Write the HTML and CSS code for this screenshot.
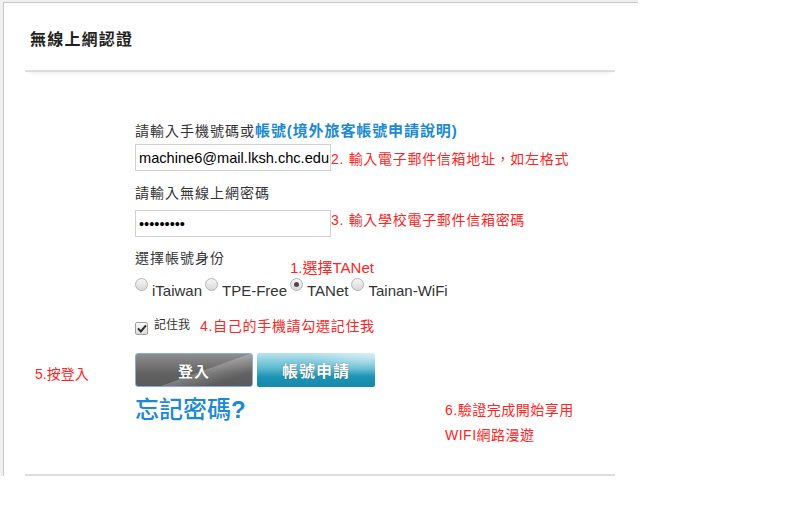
FILE: index.html
```html
<!DOCTYPE html>
<html>
<head>
  <meta charset="utf-8">
  <title>無線上網認證</title>
  <link rel="stylesheet" href="styles.css">
</head>
<body>
  <div class="frame">
    <div class="panel">
      <div class="header">
        <h2>無線上網認證</h2>
      </div>

      <form class="login-form">
        <div class="field label">請輸入手機號碼或<a href="#" class="link">帳號(境外旅客帳號申請說明)</a></div>
        <div class="field input-row first">
          <input type="text" class="text-input" value="machine6@mail.lksh.chc.edu">
          <span class="note">2.&nbsp;輸入電子郵件信箱地址，如左格式</span>
        </div>

        <div class="field label second">請輸入無線上網密碼</div>
        <div class="field input-row pass">
          <input type="password" class="text-input" value="123456789">
          <span class="note">3. 輸入學校電子郵件信箱密碼</span>
        </div>

        <div class="field label third">選擇帳號身份</div>
        <div class="field radio-row">
          <span class="note note-tanet">1.選擇TANet</span>
          <label class="radio"><span class="dot"></span><span class="radio-text">iTaiwan</span></label>
          <label class="radio"><span class="dot"></span><span class="radio-text">TPE-Free</span></label>
          <label class="radio"><span class="dot checked"></span><span class="radio-text">TANet</span></label>
          <label class="radio"><span class="dot"></span><span class="radio-text">Tainan-WiFi</span></label>
        </div>

        <div class="field remember-row">
          <span class="checkbox">
            <svg viewBox="0 0 12 12" width="10" height="10">
              <path d="M2 6.2l2.6 2.8L10 2.6" fill="none" stroke="#2b2b2b" stroke-width="2.4" stroke-linecap="square"/>
            </svg>
          </span>
          <span class="remember-text">記住我</span>
          <span class="note note-remember">4.自己的手機請勾選記住我</span>
        </div>

        <div class="button-row">
          <span class="note note-login">5.按登入</span>
          <button type="button" class="btn btn-login">登入</button>
          <button type="button" class="btn btn-apply">帳號申請</button>
        </div>

        <div class="field forgot-row">
          <a href="#" class="forgot">忘記密碼<b>?</b></a>
          <span class="note note-done">6.驗證完成開始享用<br>WIFI網路漫遊</span>
        </div>
      </form>
    </div>
  </div>
</body>
</html>
```

FILE: styles.css
```css
:root {
  --text-color: #333333;
  --title-color: #1f1f1f;
  --link-color: #1b8ad3;
  --note-color: #ff2424;
  --border-color: #cccccc;
  --frame-color: #f0f0f0;
}

body {
  margin: 0;
  background: #ffffff;
  font-family: "Liberation Sans", "Noto Sans CJK TC", sans-serif;
  color: var(--text-color);
}

.frame {
  width: 635px;
  height: 474px;
  padding: 2px 0 0 3px;
  background: var(--frame-color);
}

.panel {
  height: 100%;
  box-sizing: border-box;
  background: #ffffff;
  border-top: 1px solid #c8c8c8;
  border-left: 1px solid #c8c8c8;
  padding: 0 23px 0 21px;
}

.header {
  height: 69px;
  display: flex;
  align-items: center;
  padding: 3px 0 0 5px;
  box-sizing: border-box;
  border-bottom: 2px solid #dddddd;
  box-shadow: 0 4px 4px -3px rgba(0, 0, 0, 0.08);
}

.header h2 {
  margin: 0;
  font-size: 16px;
  font-weight: 700;
  color: var(--title-color);
  letter-spacing: 1.2px;
}

/* Form */
.login-form {
  padding-top: 49px;
  padding-bottom: 26px;
  border-bottom: 2px solid #dddddd;
}

.field {
  padding-left: 110px;
}

.label {
  font-size: 14px;
  line-height: 20px;
  letter-spacing: 1px;
  color: var(--text-color);
}

.label.second {
  margin-top: 12px;
}

.label.third {
  margin-top: 11px;
}

.link {
  color: var(--link-color);
  font-size: 15px;
  font-weight: 700;
  text-decoration: none;
  letter-spacing: 0.9px;
}

.input-row {
  display: flex;
  align-items: flex-start;
}

.input-row.first {
  margin-top: 3px;
}

.input-row.first .note {
  padding-top: 5px;
}

.input-row.pass {
  margin-top: 7px;
}

.text-input {
  width: 196px;
  height: 27px;
  box-sizing: border-box;
  margin: 0;
  padding: 0 1px 0 3px;
  border: 1px solid #d2d2d2;
  border-radius: 0;
  font-family: "Liberation Sans", sans-serif;
  font-size: 14.6px;
  color: #000000;
  outline: none;
}

.note {
  color: var(--note-color);
  font-size: 14px;
  line-height: 20px;
  letter-spacing: 0.7px;
  white-space: nowrap;
}

/* Radios */
.radio-row {
  position: relative;
  margin-top: 10px;
  display: flex;
  align-items: flex-start;
  height: 22px;
}

.note-tanet {
  position: absolute;
  left: 265px;
  top: -20px;
  letter-spacing: 0;
  font-size: 15px;
}

.radio {
  display: flex;
  align-items: flex-start;
  margin-right: 3px;
}

.dot {
  width: 11px;
  height: 11px;
  border: 1px solid #b4b4b4;
  border-radius: 50%;
  background: linear-gradient(#f6f6f6, #d8d8d8);
  display: flex;
  align-items: center;
  justify-content: center;
}

.dot.checked::after {
  content: "";
  width: 5px;
  height: 5px;
  border-radius: 50%;
  background: #4a4a4a;
}

.radio-text {
  margin-left: 4px;
  padding-top: 4px;
  font-size: 15px;
  line-height: 18px;
  color: var(--text-color);
}

/* Remember me */
.remember-row {
  display: flex;
  align-items: flex-start;
  margin-top: 16px;
  height: 20px;
}

.checkbox {
  width: 11px;
  height: 11px;
  margin-top: 6px;
  border: 1px solid #a0a0a0;
  border-radius: 2px;
  background: linear-gradient(#fafafa, #dcdcdc);
  display: flex;
  align-items: center;
  justify-content: center;
}

.remember-text {
  margin-left: 6px;
  font-size: 12px;
  line-height: 18px;
  color: var(--text-color);
}

.note-remember {
  margin-left: 10px;
  font-size: 14px;
}

/* Buttons */
.button-row {
  display: flex;
  align-items: flex-start;
  margin-top: 17px;
  padding-left: 10px;
}

.note-login {
  width: 100px;
  margin-top: 11px;
  letter-spacing: 0;
}

.btn {
  width: 118px;
  height: 34px;
  margin: 0 4px 0 0;
  border-radius: 3px;
  font-family: "Noto Sans CJK TC", sans-serif;
  font-size: 15px;
  font-weight: 700;
  color: #ffffff;
  letter-spacing: 1px;
  text-shadow: 0 0 1px rgba(0, 0, 0, 0.5);
  cursor: pointer;
}

.btn-login {
  border: 1px solid #86a9ef;
  background:
    linear-gradient(160deg, rgba(255, 255, 255, 0) 55%, rgba(255, 255, 255, 0.22) 56%, rgba(255, 255, 255, 0) 80%),
    linear-gradient(#8e8e8e, #626262 60%, #5a5a5a);
}

.btn-apply {
  border: none;
  border-radius: 2px;
  font-size: 16px;
  background:
    radial-gradient(ellipse 60px 22px at 112px 0, rgba(255, 255, 255, 0.45), rgba(255, 255, 255, 0) 100%),
    linear-gradient(#b9e3ee, #5ab8cf 45%, #1e93b4 70%, #1589ab);
}

/* Forgot password */
.forgot-row {
  display: grid;
  grid-template-columns: 310px auto;
  align-items: start;
  margin-top: 9px;
}

.forgot {
  color: var(--link-color);
  font-size: 24px;
  line-height: 28px;
  font-weight: 500;
  text-decoration: none;
}

.forgot b {
  font-weight: 700;
}

.note-done {
  margin-top: 2px;
  line-height: 25px;
  letter-spacing: 0.5px;
}
```
